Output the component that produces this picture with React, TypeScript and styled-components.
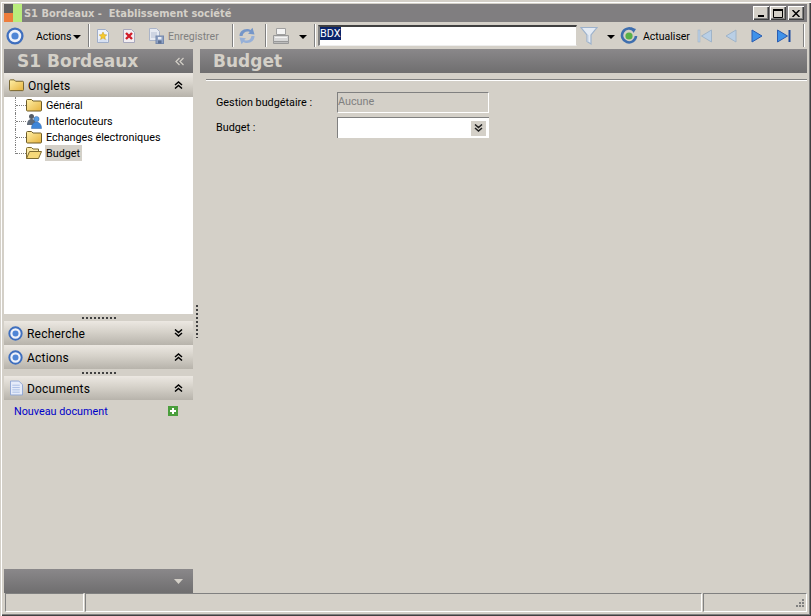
import React from "react";
import styled, { createGlobalStyle } from "styled-components";

const Global = createGlobalStyle`
  html, body { margin: 0; padding: 0; background: #d4d0c8; }
  * { box-sizing: border-box; }
  svg { flex: none; display: block; }
`;

const FONT = `Roboto, "Noto Sans", sans-serif`;
const HEAD = `"DejaVu Sans", "Liberation Sans", sans-serif`;

const Win = styled.div`
  width: 811px;
  height: 616px;
  background: #d4d0c8;
  display: flex;
  flex-direction: column;
  padding: 4px 4px 4px 4px;
  font-family: ${FONT};
  font-size: 10.8px;
  color: #000;
  overflow: hidden;
  border-top: 1px solid #d4d0c8;
  box-shadow: inset 1px 1px 0 #d4d0c8, inset 2px 2px 0 #ffffff, inset -1px -1px 0 #404040, inset -2px -2px 0 #808080;
`;

const TitleBar = styled.div`
  height: 18px;
  margin-top: -1px;
  background: #807e80;
  display: flex;
  align-items: center;
  flex: none;
`;

const TitleText = styled.div`
  font-family: ${HEAD};
  font-weight: bold;
  font-size: 9.9px;
  color: #d4d0c8;
  margin-left: 2px;
  white-space: pre;
`;

const WinButtons = styled.div`
  margin-left: auto;
  display: flex;
  margin-right: 3px;
`;

const WinBtn = styled.div<{ $gap?: number }>`
  width: 16px;
  height: 14px;
  background: #d4d0c8;
  margin-left: ${(p) => p.$gap ?? 0}px;
  box-shadow: inset 1px 1px 0 #fff, inset -1px -1px 0 #404040, inset -2px -2px 0 #808080;
  display: flex;
  align-items: center;
  justify-content: center;
`;

const Toolbar = styled.div`
  height: 27px;
  flex: none;
  display: flex;
  align-items: center;
  padding-left: 2px;
`;

const Sep = styled.div<{ $l: number; $r: number }>`
  width: 2px;
  height: 23px;
  margin: 0 ${(p) => p.$r}px 0 ${(p) => p.$l}px;
  border-left: 1px solid #808080;
  border-right: 1px solid #fff;
  flex: none;
`;

const Slot = styled.div<{ $l?: number }>`
  margin-left: ${(p) => p.$l ?? 0}px;
  display: flex;
  align-items: center;
  flex: none;
`;

const ToolLabel = styled.span<{ $dim?: boolean; $l?: number; $w: number }>`
  margin-left: ${(p) => p.$l ?? 0}px;
  margin-top: 2px;
  width: ${(p) => p.$w}px;
  font-size: 10.5px;
  color: ${(p) => (p.$dim ? "#808080" : "#000")};
  white-space: nowrap;
  flex: none;
`;

const Caret = styled.div<{ $l?: number }>`
  width: 0;
  height: 0;
  flex: none;
  margin-left: ${(p) => p.$l ?? 0}px;
  margin-top: 2px;
  border-left: 4px solid transparent;
  border-right: 4px solid transparent;
  border-top: 4px solid #000;
`;

const SearchField = styled.div`
  width: 259px;
  height: 21px;
  margin-left: 1px;
  flex: none;
  background: #fff;
  border-top: 2px solid #404040;
  border-left: 2px solid #808080;
  border-right: 1px solid #d4d0c8;
  border-bottom: 1px solid #eee;
  padding: 0;
  display: flex;
  align-items: flex-start;
`;

const Selected = styled.span`
  background: #0a246a;
  color: #fff;
  line-height: 14px;
  height: 13px;
  padding-right: 1px;
`;

const Body = styled.div`
  flex: 1;
  display: flex;
  min-height: 0;
`;

const Side = styled.div`
  width: 189px;
  flex: none;
  display: flex;
  flex-direction: column;
`;

const DarkBar = styled.div`
  height: 24px;
  flex: none;
  background: linear-gradient(#8a888a, #6f6e6f);
  display: flex;
  align-items: center;
  color: #d4d0c8;
`;

const BigTitle = styled.div`
  font-family: ${HEAD};
  font-weight: bold;
  font-size: 17px;
  color: #d4d0c8;
  margin-left: 13px;
  line-height: 24px;
`;

const Collapse = styled.div`
  margin-left: auto;
  margin-right: 9px;
  display: flex;
`;

const Section = styled.div`
  height: 24px;
  flex: none;
  background: linear-gradient(#ece8e2, #d6d2ca 45%, #b7b3ab);
  display: flex;
  align-items: center;
  font-size: 12px;
  padding-left: 4px;
`;

const SectionLabel = styled.span`
  margin-left: 4px;
  margin-top: 2px;
  letter-spacing: 0.2px;
`;

const Chevron = styled.div`
  margin-left: auto;
  margin-right: 10px;
  display: flex;
`;

const Tree = styled.div`
  height: 217px;
  flex: none;
  background: #fff;
`;

const TreeRow = styled.div<{ $last?: boolean }>`
  position: relative;
  height: 16px;
  padding-left: 22px;
  display: flex;
  align-items: center;
  &::before {
    content: "";
    position: absolute;
    left: 11px;
    top: 0;
    height: ${(p) => (p.$last ? 9 : 16)}px;
    border-left: 1px dotted #808080;
  }
  &::after {
    content: "";
    position: absolute;
    left: 12px;
    width: 10px;
    top: 8px;
    border-top: 1px dotted #808080;
  }
`;

const TreeLabel = styled.span<{ $on?: boolean }>`
  margin-left: 3px;
  padding: 1px 2px 0 1px;
  line-height: 15px;
  background: ${(p) => (p.$on ? "#d4d0c8" : "transparent")};
  white-space: nowrap;
`;

const Grip = styled.div`
  height: 7px;
  flex: none;
  display: flex;
  align-items: center;
  justify-content: center;
`;

const GripDots = styled.div`
  width: 34px;
  height: 2px;
  background: repeating-linear-gradient(90deg, #404040 0 2px, transparent 2px 4px);
`;

const DocRow = styled.div`
  height: 22px;
  flex: none;
  display: flex;
  align-items: center;
  padding-left: 10px;
  padding-right: 15px;
  justify-content: space-between;
  color: #0000c8;
`;

const Spacer = styled.div`
  flex: 1;
`;

const VSplit = styled.div`
  width: 7px;
  flex: none;
  display: flex;
  align-items: flex-start;
  justify-content: center;
  padding-top: 256px;
`;

const VDots = styled.div`
  width: 2px;
  height: 33px;
  background: repeating-linear-gradient(180deg, #404040 0 2px, transparent 2px 4px);
`;

const Main = styled.div`
  flex: 1;
  display: flex;
  flex-direction: column;
`;

const Rule = styled.div`
  height: 2px;
  margin: 6px 0 0 6px;
  border-top: 1px solid #808080;
  border-bottom: 1px solid #fff;
  flex: none;
`;

const Form = styled.div`
  padding: 11px 0 0 16px;
  display: flex;
  flex-direction: column;
  gap: 4px;
`;

const FormRow = styled.div`
  height: 21px;
  display: flex;
  align-items: center;
`;

const FormLabel = styled.div`
  width: 121px;
  flex: none;
`;

const ReadOnly = styled.div`
  width: 152px;
  height: 21px;
  background: #d4d0c8;
  border: 1px solid #808080;
  border-right-color: #fff;
  border-bottom-color: #fff;
  color: #808080;
  line-height: 17px;
`;

const ComboBox = styled.div`
  width: 152px;
  height: 21px;
  background: #fff;
  border-top: 1px solid #808080;
  border-left: 1px solid #808080;
  display: flex;
  align-items: center;
  justify-content: flex-end;
  padding-right: 3px;
`;

const ComboBtn = styled.div`
  width: 15px;
  height: 15px;
  background: #d4d0c8;
  display: flex;
  align-items: center;
  justify-content: center;
`;

const Status = styled.div`
  height: 19px;
  flex: none;
  display: flex;
  gap: 1px;
  padding-left: 1px;
`;

const StatusCell = styled.div<{ $w?: number }>`
  ${(p) => (p.$w ? `width: ${p.$w}px; flex: none;` : "flex: 1;")}
  position: relative;
  border-top: 1px solid #808080;
  border-left: 1px solid #808080;
  border-right: 1px solid #fff;
  border-bottom: 1px solid #fff;
`;

const ResizeGrip = styled.svg`
  position: absolute;
  right: 1px;
  bottom: 1px;
`;

/* ---- drawings ---- */

const Logo = () => (
  <svg width="18" height="18" viewBox="0 0 18 18">
    <rect x="0" y="0" width="9" height="9" fill="#5e5e5e" />
    <rect x="0" y="9" width="9" height="9" fill="#ee7d3b" />
    <rect x="9" y="0" width="9" height="18" fill="#b9ec7c" />
  </svg>
);

const Target = ({ size = 18 }: { size?: number }) => (
  <svg width={size} height={size} viewBox="0 0 17 17">
    <circle cx="8.500" cy="8.500" r="7" fill="#eef2fa" stroke="#3f6fbe" strokeWidth="2.200" />
    <circle cx="8.500" cy="8.500" r="3.400" fill="#4f86d6" />
  </svg>
);

const NewDoc = () => (
  <svg width="14" height="16" viewBox="0 0 14 16">
    <path d="M1.500 1.500h8l3 3v10h-11z" fill="#eef2fb" stroke="#a0aec8" />
    <path d="M2.500 11h9v3h-9z" fill="#d6e0f2" />
    <path d="M7 4l1.200 2.600 2.600.3-2 1.800.6 2.700L7 10l-2.400 1.400.6-2.700-2-1.800 2.600-.3z" fill="#f6c92e" stroke="#c49a20" strokeWidth=".5" />
  </svg>
);

const DelDoc = () => (
  <svg width="14" height="16" viewBox="0 0 14 16">
    <path d="M1.500 1.500h8l3 3v10h-11z" fill="#f2eef2" stroke="#a8a8bc" />
    <path d="M4 5l6 6M10 5l-6 6" stroke="#d01c28" strokeWidth="2.400" />
  </svg>
);

const SaveDoc = () => (
  <svg width="15" height="16" viewBox="0 0 15 16">
    <path d="M.5.500h7l3 3v9H.5z" fill="#e6eaf2" stroke="#aab4c8" />
    <path d="M2 5h6M2 7h6M2 9h6" stroke="#b4bed2" />
    <rect x="7" y="8" width="7.500" height="7.500" fill="#8fa2c4" stroke="#7488ac" />
    <rect x="9" y="9" width="3.500" height="2.500" fill="#e6eaf2" />
    <rect x="9" y="12.500" width="3.500" height="3" fill="#5c6f92" />
  </svg>
);

const Refresh = () => (
  <svg width="18" height="18" viewBox="0 0 18 18">
    <path d="M1.500 9c0-4 3-7 7.500-7 1.500 0 2.500.4 3.500 1L14.500.8 16.500 7.500l-6.500-.7 1.800-1.700C11 4.600 10 4.500 9.500 4.500 7 4.500 5 6 4.500 9z" fill="#7596c8" />
    <path d="M16.500 9c0 4-3 7-7.500 7-1.500 0-2.500-.4-3.500-1L3.500 17.200 1.500 10.500l6.500.7-1.800 1.700c.8.5 1.800.6 2.300.6 2.500 0 4.500-1.500 5-4.500z" fill="#96b0d8" />
  </svg>
);

const Printer = () => (
  <svg width="18" height="18" viewBox="0 0 18 18">
    <path d="M4.500 1.500h9v6h-9z" fill="#f4f4f4" stroke="#a0a0a0" />
    <path d="M1.500 8.500h15v6h-15z" fill="#d8d8d8" stroke="#989898" />
    <path d="M1.500 14.500h15v2h-15z" fill="#bcbcbc" stroke="#989898" />
    <rect x="3" y="10" width="12" height="1" fill="#f4f4f4" />
  </svg>
);

const Funnel = () => (
  <svg width="18" height="20" viewBox="0 0 18 20">
    <path d="M1 1.500h16l-6 7.500v9l-4-2.500V9z" fill="#e4ebf4" stroke="#9db2cc" strokeWidth="1.200" />
    <path d="M8 9v7" stroke="#c2d0e2" />
  </svg>
);

const Actualise = () => (
  <svg width="18" height="18" viewBox="0 0 18 18">
    <path d="M14 3.500A7 7 0 1 0 16 9" fill="none" stroke="#3e6eae" strokeWidth="2.600" />
    <path d="M11 0.500l5 1.500-2.500 4z" fill="#3e6eae" />
    <circle cx="9" cy="9" r="3.600" fill="#58b048" />
  </svg>
);

const Nav = ({ kind, dim }: { kind: "first" | "prev" | "next" | "last"; dim?: boolean }) => {
  const fill = dim ? "#b9cfe6" : "#3f92ea";
  const stroke = dim ? "#a0b4c8" : "#2a5cb0";
  return (
    <svg width="16" height="16" viewBox="0 0 16 16">
      {kind === "first" && <rect x="1" y="2" width="2" height="12" fill={fill} stroke={stroke} strokeWidth=".6" />}
      {(kind === "first" || kind === "prev") && (
        <path d={kind === "first" ? "M14.500 2v12L4.500 8z" : "M13 2v12L3 8z"} fill={fill} stroke={stroke} />
      )}
      {(kind === "next" || kind === "last") && (
        <path d={kind === "last" ? "M1.500 2v12l10-6z" : "M3 2v12l10-6z"} fill={fill} stroke={stroke} />
      )}
      {kind === "last" && <rect x="12.500" y="2" width="2" height="12" fill="#1e4ca0" />}
    </svg>
  );
};

const Folder = ({ w = 16 }: { w?: number }) => (
  <svg width={w} height="14" viewBox="0 0 16 14">
    <defs>
      <linearGradient id="fg" x1="0" y1="0" x2="1" y2="1">
        <stop offset="0" stopColor="#fff0a8" />
        <stop offset="1" stopColor="#e6b23c" />
      </linearGradient>
    </defs>
    <path d="M.5 2.500c0-.6.4-1 1-1h4l1.500 1.500h7.500c.6 0 1 .4 1 1v8c0 .6-.4 1-1 1h-13c-.6 0-1-.4-1-1z" fill="url(#fg)" stroke="#6e5c28" />
  </svg>
);

const OpenFolder = () => (
  <svg width="16" height="14" viewBox="0 0 16 14">
    <path d="M.5 12.500V2.500c0-.6.4-1 1-1h4L7 3h5.500v2.500" fill="#fbe9a6" stroke="#7d6a30" />
    <path d="M.5 12.500L3.500 5.500h12l-3 7z" fill="#f6d878" stroke="#7d6a30" />
  </svg>
);

const People = () => (
  <svg width="16" height="16" viewBox="0 0 16 16">
    <circle cx="5.500" cy="3.500" r="2.500" fill="#555c66" />
    <path d="M1 12c0-4 2-6 4.500-6S10 8 10 12z" fill="#5f6a78" />
    <circle cx="10.500" cy="6" r="2.600" fill="#5aa0e6" stroke="#2e62a8" strokeWidth=".5" />
    <path d="M5.500 15.500c0-4 2.200-6.500 5-6.500s5 2.500 5 6.500z" fill="#3f86d8" stroke="#2e62a8" strokeWidth=".5" />
  </svg>
);

const DocIcon = () => (
  <svg width="13" height="16" viewBox="0 0 14 16">
    <path d="M.5.500h9l4 4v11H.5z" fill="#e6ecfa" stroke="#8ea4d4" />
    <path d="M2.500 5h8M2.500 7.500h8M2.500 10h8M2.500 12.500h8" stroke="#a8bce4" />
  </svg>
);

const AddIcon = () => (
  <svg width="10" height="10" viewBox="0 0 10 10">
    <rect width="10" height="10" fill="#4a9e3c" />
    <path d="M5 2v6M2 5h6" stroke="#fff" strokeWidth="2" />
  </svg>
);

const Chevrons = ({ up, color = "#000" }: { up?: boolean; color?: string }) => (
  <svg width="9" height="8" viewBox="0 0 9 8">
    <path
      d={up ? "M1 4l3.500-3L8 4M1 7.500l3.500-3 3.500 3" : "M1 .5l3.500 3L8 .5M1 4l3.500 3L8 4"}
      fill="none"
      stroke={color}
      strokeWidth="1.500"
    />
  </svg>
);

const LeftChevrons = () => (
  <svg width="9" height="9" viewBox="0 0 9 9">
    <path d="M4.500 1L1 4.500 4.500 8M8.500 1L5 4.500 8.500 8" fill="none" stroke="#d4d0c8" strokeWidth="1.200" />
  </svg>
);

export default function App() {
  return (
    <>
      <Global />
      <Win>
        <TitleBar>
          <Logo />
          <TitleText>{"S1 Bordeaux -  Etablissement société"}</TitleText>
          <WinButtons>
            <WinBtn>
              <svg width="8" height="8" viewBox="0 0 8 8"><rect x="1" y="6" width="6" height="2" fill="#000" /></svg>
            </WinBtn>
            <WinBtn $gap={1}>
              <svg width="10" height="9" viewBox="0 0 10 9"><path d="M.5.500h9v8h-9z" fill="none" stroke="#000" /><rect x="0" y="0" width="10" height="2" fill="#000" /></svg>
            </WinBtn>
            <WinBtn $gap={2}>
              <svg width="8" height="7" viewBox="0 0 8 7"><path d="M.5 0l7 7M7.500 0l-7 7" stroke="#000" strokeWidth="1.500" /></svg>
            </WinBtn>
          </WinButtons>
        </TitleBar>
        <Toolbar>
          <Target />
          <ToolLabel $l={12} $w={35}>Actions</ToolLabel>
          <Caret $l={2} />
          <Sep $l={7} $r={6} />
          <NewDoc />
          <Slot $l={12}><DelDoc /></Slot>
          <Slot $l={13}><SaveDoc /></Slot>
          <ToolLabel $dim $l={4} $w={53}>Enregistrer</ToolLabel>
          <Sep $l={11} $r={4} />
          <Refresh />
          <Sep $l={9} $r={5} />
          <Printer />
          <Caret $l={9} />
          <Sep $l={7} $r={1} />
          <SearchField><Selected>BDX</Selected></SearchField>
          <Slot $l={3}><Funnel /></Slot>
          <Caret $l={9} />
          <Slot $l={5}><Actualise /></Slot>
          <ToolLabel $l={5} $w={47}>Actualiser</ToolLabel>
          <Slot $l={7}><Nav kind="first" dim /></Slot>
          <Slot $l={10}><Nav kind="prev" dim /></Slot>
          <Slot $l={10}><Nav kind="next" /></Slot>
          <Slot $l={11}><Nav kind="last" /></Slot>
          <Sep $l={11} $r={0} />
        </Toolbar>
        <Body>
          <Side>
            <DarkBar>
              <BigTitle>S1 Bordeaux</BigTitle>
              <Collapse><LeftChevrons /></Collapse>
            </DarkBar>
            <Section>
              <Slot $l={1}><Folder w={15} /></Slot>
              <SectionLabel>Onglets</SectionLabel>
              <Chevron><Chevrons up /></Chevron>
            </Section>
            <Tree>
              <TreeRow><Folder /><TreeLabel>Général</TreeLabel></TreeRow>
              <TreeRow><People /><TreeLabel>Interlocuteurs</TreeLabel></TreeRow>
              <TreeRow><Folder /><TreeLabel>Echanges électroniques</TreeLabel></TreeRow>
              <TreeRow $last><OpenFolder /><TreeLabel $on>Budget</TreeLabel></TreeRow>
            </Tree>
            <Grip><GripDots /></Grip>
            <Section>
              <Target size={15} />
              <SectionLabel>Recherche</SectionLabel>
              <Chevron><Chevrons /></Chevron>
            </Section>
            <Section>
              <Target size={15} />
              <SectionLabel>Actions</SectionLabel>
              <Chevron><Chevrons up /></Chevron>
            </Section>
            <Grip><GripDots /></Grip>
            <Section>
              <Slot $l={2}><DocIcon /></Slot>
              <SectionLabel>Documents</SectionLabel>
              <Chevron><Chevrons up /></Chevron>
            </Section>
            <DocRow>
              <span>Nouveau document</span>
              <AddIcon />
            </DocRow>
            <Spacer />
            <DarkBar>
              <Chevron>
                <svg width="9" height="5" viewBox="0 0 9 5"><path d="M0 0h9L4.500 5z" fill="#d4d0c8" /></svg>
              </Chevron>
            </DarkBar>
          </Side>
          <VSplit><VDots /></VSplit>
          <Main>
            <DarkBar>
              <BigTitle>Budget</BigTitle>
            </DarkBar>
            <Rule />
            <Form>
              <FormRow>
                <FormLabel>Gestion budgétaire :</FormLabel>
                <ReadOnly>Aucune</ReadOnly>
              </FormRow>
              <FormRow>
                <FormLabel>Budget :</FormLabel>
                <ComboBox>
                  <ComboBtn><Chevrons color="#202020" /></ComboBtn>
                </ComboBox>
              </FormRow>
            </Form>
          </Main>
        </Body>
        <Status>
          <StatusCell $w={79} />
          <StatusCell />
          <StatusCell $w={104}>
            <ResizeGrip width="12" height="12" viewBox="0 0 12 12">
              <path d="M9 1h2v2H9zM6 4h2v2H6zM9 4h2v2H9zM3 7h2v2H3zM6 7h2v2H6zM9 7h2v2H9z" fill="#808080" />
            </ResizeGrip>
          </StatusCell>
        </Status>
      </Win>
    </>
  );
}
